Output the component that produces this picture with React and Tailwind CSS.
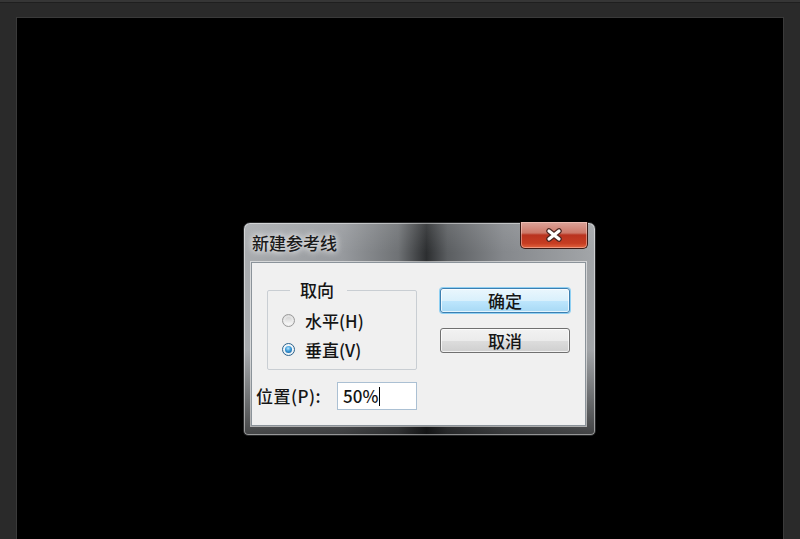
import React from 'react';

const font = "font-['Noto_Sans_CJK_SC','Noto_Sans',sans-serif]";

function Radio({ checked }) {
  return checked ? (
    <span className="w-[13px] h-[13px] rounded-full border border-[#2c628b] bg-[radial-gradient(circle_at_50%_40%,#ffffff_0%,#dfeaf2_100%)] flex items-center justify-center">
      <span className="w-[7px] h-[7px] rounded-full bg-[radial-gradient(circle_at_45%_35%,#b9e6ff_0%,#3a9ad9_45%,#0f4f8a_100%)]" />
    </span>
  ) : (
    <span className="w-[13px] h-[13px] rounded-full border border-[#9a9a9a] bg-[radial-gradient(circle_at_50%_65%,#ffffff_0%,#e6e6e6_60%,#cfcfcf_100%)] flex items-center justify-center">
      <span className="w-[7px] h-[7px] rounded-full bg-[linear-gradient(to_bottom,#d4d4d4,#f6f6f6)]" />
    </span>
  );
}

function CloseIcon() {
  return (
    <svg width="18" height="14" viewBox="0 0 18 14">
      <path d="M4 3 L14 11 M14 3 L4 11" stroke="#4a2520" strokeWidth="5.5" strokeLinecap="round" fill="none" />
      <path d="M4 3 L14 11 M14 3 L4 11" stroke="#ffffff" strokeWidth="3.2" strokeLinecap="round" fill="none" />
    </svg>
  );
}

export default function App() {
  return (
    <div className={`relative w-[800px] h-[539px] overflow-hidden bg-[#2a2a2a] flex flex-col ${font}`}>
      <div className="h-[3px] bg-[#363636] border-b border-[#1f1f1f] shrink-0" />
      {/* canvas */}
      <div className="flex-1 mt-[15px] mx-[17px] bg-black shadow-[0_0_0_1px_#3a3a3a]" />

      {/* dialog window */}
      <div className="absolute left-[243px] top-[222px] w-[353px] h-[214px] rounded-t-[7px] rounded-b-[5px] border border-[#252627] pl-[7px] pr-[9px] pt-[39px] pb-[9px] bg-[linear-gradient(to_bottom,rgba(255,255,255,0.1)_0%,rgba(0,0,0,0)_14%,rgba(0,0,0,0)_60%,rgba(0,0,0,0.6)_100%),linear-gradient(to_right,#a9acaf_0%,#979a9e_28%,#6f7275_44%,#2c2e30_52%,#5b5e61_58%,#85888c_74%,#a3a6a9_100%)] shadow-[inset_0_0_0_1px_rgba(255,255,255,0.45)]">
        {/* title */}
        <div className="absolute left-[8px] top-[9px] text-[17px] font-medium leading-[22px] text-[#1b1b1b] [text-shadow:0_0_6px_rgba(255,255,255,0.9),0_0_10px_rgba(255,255,255,0.6)]">
          新建参考线
        </div>
        {/* close button */}
        <div className="absolute right-[7px] top-[-1px] w-[68px] h-[27px] rounded-b-[5px] border border-t-0 border-[#3a1a15] bg-[linear-gradient(to_bottom,#dba49a_0%,#cd7868_42%,#b9331f_50%,#c63d22_82%,#e2643e_100%)] shadow-[inset_0_0_0_1px_rgba(255,220,210,0.45)] flex items-center justify-center">
          <CloseIcon />
        </div>

        {/* client area */}
        <div className="w-full h-full bg-[#f0f0f0] border border-[#8b939a] shadow-[0_0_0_1px_rgba(255,255,255,0.55)] flex text-[17px] font-medium text-[#151515]">
          <div className="w-[165px] pl-[4px] pt-[17px] flex flex-col">
            <fieldset className="ml-[11px] w-[150px] border border-[#c9ced3] rounded-[2px] pl-[14px] pt-[6px] pb-[5px]">
              <legend className="ml-[8px] pl-[10px] pr-[13px] leading-[20px]">取向</legend>
              <div className="h-[29px] flex items-center gap-[10px]">
                <Radio />
                <span className="leading-[20px]">水平(H)</span>
              </div>
              <div className="h-[29px] flex items-center gap-[10px]">
                <Radio checked />
                <span className="leading-[20px]">垂直(V)</span>
              </div>
            </fieldset>
            <div className="mt-[12px] flex items-center">
              <span className="w-[81px] leading-[20px] tracking-[0.5px]">位置(P):</span>
              <div className="w-[80px] h-[28px] bg-white border border-[#abc0d3] flex items-center pl-[5px]">
                <span className="leading-[20px]">50%</span>
                <span className="w-[1px] h-[19px] bg-black ml-[1px]" />
              </div>
            </div>
          </div>
          <div className="ml-[23px] pt-[25px] flex flex-col gap-[15px]">
            <button className="w-[130px] h-[25px] rounded-[3px] border border-[#3c7fb1] bg-[linear-gradient(to_bottom,#eaf6fd_0%,#d9f0fc_50%,#bee6fd_51%,#a7d9f5_100%)] shadow-[0_0_0_1px_#8fd0f3,inset_0_0_0_1px_rgba(255,255,255,0.7)] text-[17px] font-medium leading-[20px] text-[#151515] flex items-center justify-center">
              确定
            </button>
            <button className="w-[130px] h-[25px] rounded-[3px] border border-[#707070] bg-[linear-gradient(to_bottom,#f2f2f2_0%,#ebebeb_50%,#dddddd_51%,#cfcfcf_100%)] shadow-[inset_0_0_0_1px_rgba(255,255,255,0.7)] text-[17px] font-medium leading-[20px] text-[#151515] flex items-center justify-center">
              取消
            </button>
          </div>
        </div>
      </div>
    </div>
  );
}
